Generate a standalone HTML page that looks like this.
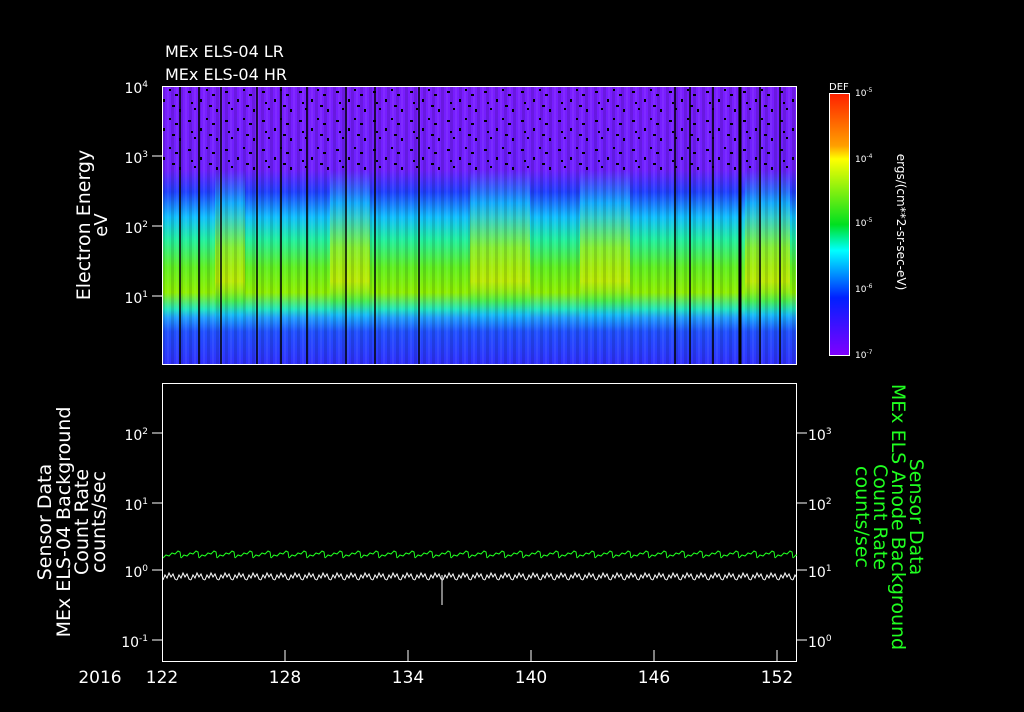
<!DOCTYPE html>
<html><head><style>
body{margin:0;background:#000;width:1024px;height:708px;overflow:hidden;font-family:"DejaVu Sans","Liberation Sans",sans-serif;color:#fff}
</style></head><body>
<svg width="1024" height="708" xmlns="http://www.w3.org/2000/svg" font-family="DejaVu Sans, Liberation Sans, sans-serif">
<defs>
<linearGradient id="sp" x1="0" y1="0" x2="0" y2="1">
<stop offset="0" stop-color="#7a1cff"/><stop offset="0.3" stop-color="#7020ff"/>
<stop offset="0.38" stop-color="#2040ff"/><stop offset="0.47" stop-color="#10c0ff"/>
<stop offset="0.55" stop-color="#20f0a0"/><stop offset="0.65" stop-color="#60f020"/>
<stop offset="0.74" stop-color="#90f000"/><stop offset="0.8" stop-color="#20e8c0"/>
<stop offset="0.83" stop-color="#20a0ff"/><stop offset="0.88" stop-color="#2050ff"/>
<stop offset="1" stop-color="#3030ff"/></linearGradient>
<linearGradient id="sp2" x1="0" y1="0" x2="0" y2="1">
<stop offset="0" stop-color="#7a1cff"/><stop offset="0.3" stop-color="#6a20ff"/>
<stop offset="0.42" stop-color="#10d0ff"/><stop offset="0.58" stop-color="#c0f000"/>
<stop offset="0.7" stop-color="#e8e800"/><stop offset="0.77" stop-color="#40f040"/>
<stop offset="0.82" stop-color="#10c0ff"/><stop offset="0.88" stop-color="#2050ff"/>
<stop offset="1" stop-color="#3030ff"/></linearGradient>
<linearGradient id="cb" x1="0" y1="0" x2="0" y2="1">
<stop offset="0" stop-color="#ff2000"/><stop offset="0.2" stop-color="#ffa000"/>
<stop offset="0.25" stop-color="#ffff00"/><stop offset="0.5" stop-color="#00e020"/>
<stop offset="0.6" stop-color="#00ffff"/><stop offset="0.78" stop-color="#0020ff"/>
<stop offset="1" stop-color="#8000ff"/></linearGradient>
<pattern id="dots" width="37" height="29" patternUnits="userSpaceOnUse">
<rect x="3" y="4" width="3" height="2" fill="#000"/><rect x="15" y="12" width="2" height="3" fill="#000"/>
<rect x="27" y="7" width="3" height="2" fill="#000"/><rect x="9" y="21" width="2" height="2" fill="#000"/>
<rect x="31" y="22" width="2" height="3" fill="#000"/><rect x="21" y="2" width="2" height="2" fill="#000"/>
<rect x="6" y="15" width="2" height="2" fill="#000"/><rect x="24" y="18" width="3" height="2" fill="#000"/>
</pattern>
<pattern id="stripes" width="9" height="279" patternUnits="userSpaceOnUse">
<rect x="0" y="0" width="3" height="279" fill="#000" opacity="0.12"/>
<rect x="5" y="0" width="2" height="279" fill="#fff" opacity="0.06"/>
</pattern>
<pattern id="gs" x="163" y="548" width="18" height="12" patternUnits="userSpaceOnUse">
<polyline points="0,10 3,7 6,8 9,5 12,6 15,3 17,4 18,10" fill="none" stroke="#20ff20" stroke-width="1"/>
</pattern>
<pattern id="ws" x="163" y="570" width="14" height="14" patternUnits="userSpaceOnUse">
<polyline points="0,10 2,5 4,8 6,3 8,7 10,4 12,9 14,10" fill="none" stroke="#fff" stroke-width="1"/>
</pattern>
</defs>
<text x="165" y="57" font-size="16" fill="#fff">MEx ELS-04 LR</text>
<text x="165" y="80" font-size="16" fill="#fff">MEx ELS-04 HR</text>
<rect x="162" y="86" width="635" height="279" fill="url(#sp)"/>
<g opacity="0.6">
<rect x="215" y="86" width="30" height="279" fill="url(#sp2)"/>
<rect x="330" y="86" width="40" height="279" fill="url(#sp2)"/>
<rect x="470" y="86" width="60" height="279" fill="url(#sp2)"/>
<rect x="580" y="86" width="50" height="279" fill="url(#sp2)"/>
<rect x="745" y="86" width="45" height="279" fill="url(#sp2)"/>
</g>
<rect x="162" y="86" width="635" height="279" fill="url(#stripes)"/>
<rect x="162" y="86" width="635" height="90" fill="url(#dots)"/>
<g stroke="#000" stroke-width="1.5">
<line x1="180" y1="86" x2="180" y2="365"/><line x1="199" y1="86" x2="199" y2="365"/>
<line x1="221" y1="86" x2="221" y2="365"/><line x1="257" y1="86" x2="257" y2="365"/>
<line x1="281" y1="86" x2="281" y2="365"/><line x1="307" y1="86" x2="307" y2="365"/>
<line x1="346" y1="86" x2="346" y2="365"/><line x1="375" y1="86" x2="375" y2="365"/>
<line x1="419" y1="86" x2="419" y2="365"/><line x1="675" y1="86" x2="675" y2="365"/>
<line x1="690" y1="86" x2="690" y2="365"/><line x1="713" y1="86" x2="713" y2="365"/>
<line x1="740" y1="86" x2="740" y2="365" stroke-width="3"/><line x1="760" y1="86" x2="760" y2="365"/>
<line x1="780" y1="86" x2="780" y2="365"/>
</g>
<rect x="162.5" y="86.5" width="634" height="278" fill="none" stroke="#fff"/>
<g font-size="14" fill="#fff" text-anchor="end">
<text x="148" y="93">10<tspan font-size="9" dy="-6">4</tspan></text>
<text x="148" y="163">10<tspan font-size="9" dy="-6">3</tspan></text>
<text x="148" y="233">10<tspan font-size="9" dy="-6">2</tspan></text>
<text x="148" y="303">10<tspan font-size="9" dy="-6">1</tspan></text>
</g>
<g stroke="#fff"><line x1="152" y1="156" x2="162" y2="156"/><line x1="152" y1="226" x2="162" y2="226"/><line x1="152" y1="296" x2="162" y2="296"/></g>
<text transform="translate(90,225) rotate(-90)" font-size="19" text-anchor="middle" fill="#fff">Electron Energy</text>
<text transform="translate(107,225) rotate(-90)" font-size="18" text-anchor="middle" fill="#fff">eV</text>
<text x="829" y="90" font-size="10" fill="#fff">DEF</text>
<rect x="829.5" y="93.5" width="20" height="262" fill="url(#cb)" stroke="#fff"/>
<g font-size="9" fill="#fff">
<text x="855" y="96">10<tspan font-size="6" dy="-4">-5</tspan></text>
<text x="855" y="162">10<tspan font-size="6" dy="-4">-4</tspan></text>
<text x="855" y="226">10<tspan font-size="6" dy="-4">-5</tspan></text>
<text x="855" y="292">10<tspan font-size="6" dy="-4">-6</tspan></text>
<text x="855" y="358">10<tspan font-size="6" dy="-4">-7</tspan></text>
</g>
<text transform="translate(897,222) rotate(90)" font-size="12" text-anchor="middle" fill="#fff">ergs/(cm**2-sr-sec-eV)</text>
<rect x="162.5" y="383.5" width="634" height="278" fill="none" stroke="#fff"/>
<rect x="163" y="548" width="634" height="12" fill="url(#gs)"/>
<rect x="163" y="570" width="634" height="14" fill="url(#ws)"/>
<line x1="442" y1="575" x2="442" y2="605" stroke="#fff"/>
<g font-size="14" fill="#fff" text-anchor="end">
<text x="148" y="440">10<tspan font-size="9" dy="-6">2</tspan></text>
<text x="148" y="510">10<tspan font-size="9" dy="-6">1</tspan></text>
<text x="148" y="577">10<tspan font-size="9" dy="-6">0</tspan></text>
<text x="148" y="647">10<tspan font-size="9" dy="-6">-1</tspan></text>
</g>
<g font-size="14" fill="#fff">
<text x="808" y="440">10<tspan font-size="9" dy="-6">3</tspan></text>
<text x="808" y="510">10<tspan font-size="9" dy="-6">2</tspan></text>
<text x="808" y="577">10<tspan font-size="9" dy="-6">1</tspan></text>
<text x="808" y="647">10<tspan font-size="9" dy="-6">0</tspan></text>
</g>
<g stroke="#fff"><line x1="152" y1="433" x2="162" y2="433"/><line x1="152" y1="503" x2="162" y2="503"/><line x1="152" y1="570" x2="162" y2="570"/><line x1="152" y1="640" x2="162" y2="640"/>
<line x1="797" y1="433" x2="807" y2="433"/><line x1="797" y1="503" x2="807" y2="503"/><line x1="797" y1="570" x2="807" y2="570"/><line x1="797" y1="640" x2="807" y2="640"/>
<line x1="285" y1="650" x2="285" y2="662"/><line x1="408" y1="650" x2="408" y2="662"/><line x1="531" y1="650" x2="531" y2="662"/><line x1="654" y1="650" x2="654" y2="662"/><line x1="777" y1="650" x2="777" y2="662"/></g>
<g font-size="19" fill="#fff" text-anchor="middle">
<text transform="translate(51,522) rotate(-90)">Sensor Data</text>
<text transform="translate(70,522) rotate(-90)">MEx ELS-04 Background</text>
<text transform="translate(88,522) rotate(-90)">Count Rate</text>
<text transform="translate(105,522) rotate(-90)">counts/sec</text>
</g>
<g font-size="19" fill="#20ff20" text-anchor="middle">
<text transform="translate(910,517) rotate(90)">Sensor Data</text>
<text transform="translate(892,517) rotate(90)">MEx ELS Anode Background</text>
<text transform="translate(874,517) rotate(90)">Count Rate</text>
<text transform="translate(856,517) rotate(90)">counts/sec</text>
</g>
<g font-size="17" fill="#fff" text-anchor="middle">
<text x="100" y="683">2016</text>
<text x="162" y="683">122</text><text x="285" y="683">128</text>
<text x="408" y="683">134</text><text x="531" y="683">140</text>
<text x="654" y="683">146</text><text x="777" y="683">152</text>
</g>
</svg>
</body></html>
